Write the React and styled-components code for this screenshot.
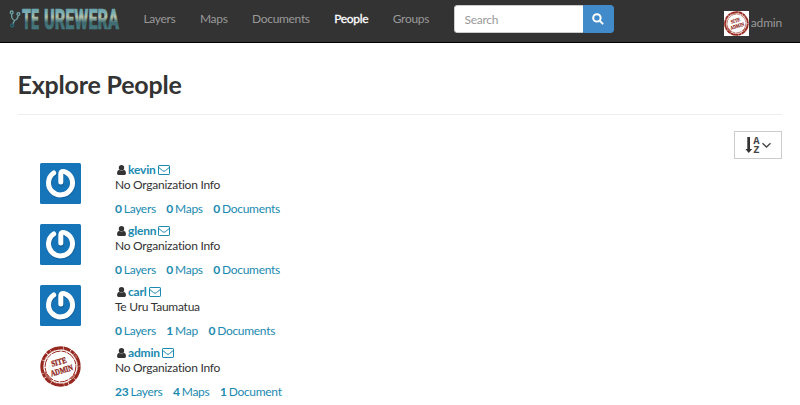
import React from 'react';
import styled, { createGlobalStyle } from 'styled-components';

const Global = createGlobalStyle`
  * { box-sizing: border-box; }
  body { margin: 0; background: #fff; color: #333; font: 12px/16px Lato, sans-serif; letter-spacing: -0.25px; overflow: hidden; }
`;
const Navbar = styled.header`
  display: flex; align-items: flex-start; height: 43px; padding: 5px 18px 0 9px;
  background: #333; border-bottom: 1px solid #000;
`;
const Brand = styled.a`
  display: block; width: 112px; height: 28px; margin-right: 22.5px;
  svg { display: block; }
`;
const Nav = styled.nav`display: flex; gap: 24.5px; padding-top: 6px; letter-spacing: -0.32px;`;
const NavLink = styled.a`
  color: ${p => (p.$active ? '#fff' : '#999')}; line-height: 16px;
  -webkit-text-stroke: ${p => (p.$active ? '0.3px #fff' : '0')};
`;
const SearchBox = styled.form`
  display: flex; width: 160px; height: 28px; margin-left: 24.5px; border-radius: 3px; overflow: hidden;
`;
const SearchInput = styled.input`
  flex: 1; min-width: 0; padding: 0 10px; border: 1px solid #ccc; border-right: 0;
  border-radius: 3px 0 0 3px; font: 12px Lato, sans-serif; letter-spacing: -0.3px; background: #fff;
  &::placeholder { color: #999; opacity: 1; }
`;
const SearchButton = styled.button`
  display: flex; align-items: center; justify-content: center; width: 31px; padding: 0;
  border: 1px solid #428bca; border-radius: 0 3px 3px 0; background: #428bca;
`;
const Account = styled.a`
  display: flex; align-items: flex-start; gap: 2px; margin: 6px 0 0 auto; color: #999; line-height: 24px; letter-spacing: -0.2px;
  svg { background: #fff; }
`;
const Main = styled.main`padding: 28px 18px 0;`;
const Title = styled.h1`
  margin: 0; height: 44px; border-bottom: 1px solid #eee; text-indent: -0.5px;
  font-size: 25px; line-height: 27px; font-weight: 700; letter-spacing: -0.2px; color: #333;
`;
const Toolbar = styled.div`display: flex; justify-content: flex-end; padding-top: 16px;`;
const SortButton = styled.button`
  width: 48px; height: 28px; padding: 0; border: 1px solid #ccc; background: #fff;
  svg { display: block; }
`;
const List = styled.ul`margin: 4px 0 0; padding: 0; list-style: none;`;
const Row = styled.li`display: flex; height: 61px; padding-left: 22px;`;
const AvatarCell = styled.div`width: 75px; svg { display: block; }`;
const Details = styled.div`display: flex; flex-direction: column;`;
const NameLine = styled.div`display: flex; align-items: center; height: 13px; gap: 2px; padding-left: 2px; margin-bottom: 1px;`;
const Name = styled.a`font-weight: 700; color: #1b8ab0; letter-spacing: -0.18px;`;
const Org = styled.div`height: 16px;`;
const Stats = styled.div`display: flex; gap: 10.5px; margin-top: 8px; color: #1b8ab0; letter-spacing: -0.3px;`;
const Count = styled.b`margin-right: -0.7px;`;

function Logo() {
  return (
    <svg width="112" height="28" viewBox="0 0 112 28" overflow="visible">
      <defs>
        <linearGradient id="hills" gradientUnits="userSpaceOnUse" x1="0" y1="4" x2="0" y2="24">
          <stop offset="0" stopColor="#69a3ad" /><stop offset=".25" stopColor="#86b4b6" />
          <stop offset=".4" stopColor="#b5c3aa" /><stop offset=".55" stopColor="#6c908f" />
          <stop offset=".68" stopColor="#3d6b70" /><stop offset="1" stopColor="#467a80" />
        </linearGradient>
      </defs>
      <g fill="none" stroke="#70a6a9" strokeWidth="1.3">
        <circle cx="2.7" cy="7.4" r="1.4" /><circle cx="9.4" cy="9" r="1.4" />
        <path d="M2.7 9.2V12Q3 14.5 5.5 15.5L3.8 19M9 11Q8.7 14.5 5.5 15.5" />
        <circle cx="3.3" cy="20.5" r="1.5" stroke="#286573" />
      </g>
      <g fill="url(#hills)" stroke="url(#hills)" strokeWidth=".5" fontFamily="Roboto, sans-serif" fontSize="27" fontWeight="900">
        <text x="13" y="23.5" letterSpacing="0" textLength="26" lengthAdjust="spacingAndGlyphs" transform="translate(4.55 0) scale(.65 1)">TE</text>
        <text x="35" y="23.5" letterSpacing="0" textLength="75" lengthAdjust="spacingAndGlyphs">UREWERA</text>
      </g>
    </svg>
  );
}
function PowerAvatar() {
  return (
    <svg width="41" height="41" viewBox="0 0 41 41">
      <rect width="41" height="41" rx="1.5" fill="#1674b8" />
      <g fill="none" strokeLinecap="round" strokeLinejoin="round">
        <path d="M14.2 9.6A12 12 0 1 0 26 9.2Q21 7.4 20.8 11.4V19.5" stroke="#0d5288" strokeWidth="5.4" transform="translate(.5 1)" opacity=".5" />
        <path d="M13.7 10A12 12 0 1 0 26 9.2Q20.9 6.9 20.8 11.2V19" stroke="#fff" strokeWidth="5" />
      </g>
    </svg>
  );
}
function StampAvatar({ size }) {
  return (
    <svg width={size} height={size} viewBox="0 0 41 41">
      <g fill="none" stroke="#96281f">
        <circle cx="20.5" cy="20.5" r="18.6" strokeWidth="3.2" strokeDasharray="13 .5 7 .7 4 .4" />
        <circle cx="20.5" cy="20.5" r="15.4" strokeWidth="1" strokeDasharray="9 1 5 .8" />
        <circle cx="20.5" cy="20.5" r="17" stroke="#d9b0a9" strokeWidth=".8" strokeDasharray="4 3 1 2" />
        <path d="M4.5 26l4 5M6.5 30.5l5 4M31 33l4-5M35 9l2 3" stroke="#b45a50" strokeWidth="1.8" />
      </g>
      <g transform="rotate(-17 20.5 20.5)" fill="#8d1e18" stroke="#8d1e18" strokeWidth=".3" fontFamily="Liberation Serif, serif" fontWeight="700" fontSize="8.5" letterSpacing="0" textAnchor="middle">
        <text x="20.2" y="18.4" textLength="15.5" lengthAdjust="spacingAndGlyphs">SITE</text>
        <text x="20.5" y="27.5" textLength="23" lengthAdjust="spacingAndGlyphs">ADMIN</text>
      </g>
    </svg>
  );
}
function UserIcon() {
  return (
    <svg width="9" height="10" viewBox="0 0 9 10" fill="#333">
      <ellipse cx="4.5" cy="2.8" rx="2.7" ry="2.8" />
      <path d="M2 4.7Q4.5 7 7 4.7Q9 5.2 9 8.3Q9 10 7.5 10H1.5Q0 10 0 8.3Q0 5.2 2 4.7Z" />
    </svg>
  );
}
function MailIcon() {
  return (
    <svg width="12" height="10" viewBox="0 0 12 10" fill="none" stroke="#1b8ab0">
      <rect x=".5" y=".5" width="11" height="9" rx=".6" /><path d="M.8 2.5L4.6 5.7Q6 6.8 7.4 5.7L11.2 2.5" />
    </svg>
  );
}
function SearchIcon() {
  return (
    <svg width="12" height="12" viewBox="0 0 12 12" fill="none" stroke="#fff" strokeWidth="2">
      <circle cx="4.9" cy="4.9" r="3.7" /><path d="M7.7 7.7L10.6 10.6" strokeLinecap="round" />
    </svg>
  );
}
function SortIcon() {
  return (
    <svg width="46" height="26" viewBox="0 0 46 26">
      <path d="M12.3 5H15V17H17.2L13.7 21L10.4 17H12.3Z" fill="#333" />
      <g fill="#444" fontFamily="Liberation Mono, monospace" fontWeight="700" fontSize="10.5" letterSpacing="0" textAnchor="middle">
        <text x="21.5" y="12">A</text><text x="21.5" y="21.2">Z</text>
      </g>
      <path d="M27.5 11.2L31.5 15L35.5 11.2" fill="none" stroke="#444" strokeWidth="1.3" />
    </svg>
  );
}

const links = ['Layers', 'Maps', 'Documents', 'People', 'Groups'];
const people = [
  { name: 'kevin', org: 'No Organization Info', stats: [[0, 'Layers'], [0, 'Maps'], [0, 'Documents']] },
  { name: 'glenn', org: 'No Organization Info', stats: [[0, 'Layers'], [0, 'Maps'], [0, 'Documents']] },
  { name: 'carl', org: 'Te Uru Taumatua', stats: [[0, 'Layers'], [1, 'Map'], [0, 'Documents']] },
  { name: 'admin', org: 'No Organization Info', stats: [[23, 'Layers'], [4, 'Maps'], [1, 'Document']], stamp: true },
];

export default function App() {
  return (
    <>
      <Global />
      <Navbar>
        <Brand><Logo /></Brand>
        <Nav>{links.map(l => <NavLink key={l} $active={l === 'People'}>{l}</NavLink>)}</Nav>
        <SearchBox>
          <SearchInput placeholder="Search" />
          <SearchButton type="button" aria-label="Search"><SearchIcon /></SearchButton>
        </SearchBox>
        <Account><StampAvatar size={25} />admin</Account>
      </Navbar>
      <Main>
        <Title>Explore People</Title>
        <Toolbar><SortButton aria-label="Sort"><SortIcon /></SortButton></Toolbar>
        <List>
          {people.map(p => (
            <Row key={p.name}>
              <AvatarCell>{p.stamp ? <StampAvatar size={41} /> : <PowerAvatar />}</AvatarCell>
              <Details>
                <NameLine><UserIcon /><Name>{p.name}</Name><MailIcon /></NameLine>
                <Org>{p.org}</Org>
                <Stats>{p.stats.map(([n, label]) => <a key={label}><Count>{n}</Count> {label}</a>)}</Stats>
              </Details>
            </Row>
          ))}
        </List>
      </Main>
    </>
  );
}
